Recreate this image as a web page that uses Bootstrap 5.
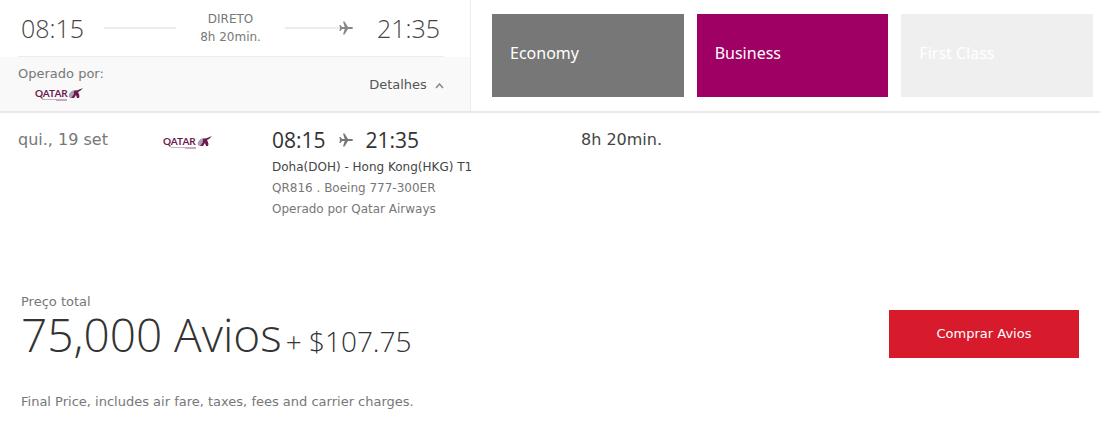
<!DOCTYPE html>
<html lang="pt-BR">
<head>
<meta charset="utf-8">
<meta name="viewport" content="width=device-width, initial-scale=1">
<title>Qatar Airways – Doha a Hong Kong</title>
<link href="https://cdn.jsdelivr.net/npm/bootstrap@5.3.0/dist/css/bootstrap.min.css" rel="stylesheet">
<style>
  body { font-family: "DejaVu Sans", Verdana, sans-serif; font-size: 12px; line-height: 18px; color: #777; background: #fff; }
  .summary-bar { border-bottom: 2px solid #e9e9e9; }
  .flight-pane { flex: 0 0 43%; max-width: 471px; border-right: 1px solid #ededed; }
  .flight-times { height: 57px; padding: 0 30px 2px 21px; }
  .flight-operator { height: 54px; padding: 8px 26px 0 18px; background: #f9f9f9; position: relative; font-size: 13px; }
  .flight-operator::before { content: ""; position: absolute; top: -1px; left: 18px; right: 26px; border-top: 1px solid #ececec; }
  .clock-time { font-family: "Open Sans", "Noto Sans", sans-serif; font-weight: 300; font-size: 25px; line-height: 30px; color: #444; }
  .clock-dark { font-family: "Open Sans", "Noto Sans", sans-serif; font-weight: 400; font-size: 21px; line-height: 26px; color: #333; }
  .route-line { height: 2px; background: #ececec; }
  .route-start { margin-left: 20px; flex: 4 1 0; }
  .route-end { flex: 3 1 0; }
  .operator-logo { width: 50px; height: 16px; display: block; }
  .operator-logo text { font-family: Lato, sans-serif; font-weight: 700; font-size: 10px; fill: #6b1c4e; }
  .details-toggle { font-size: 13px; color: #555; margin-bottom: 6px; }
  .cabins { padding: 14px 7px 14px 21px; gap: 13px; }
  .cabin { flex: 1 1 0; border: 0; color: #fff; text-align: left; font-family: "Noto Sans", sans-serif; font-size: 16px; line-height: 20px; padding: 0 18px 6px; }
  .cabin-economy { background: #777; }
  .cabin-business { background: #9f0063; }
  .cabin-first { background: #efefef; }
  .segment { display: grid; grid-template-columns: 145px 109px 309px 1fr; padding: 14px 18px 0; min-height: 180px; }
  .segment-label { font-size: 16px; line-height: 26px; }
  .segment-info { line-height: 21px; }
  .segment-hours { gap: 13px; margin-bottom: 4px; }
  .ink { color: #444; }
  .price { padding: 0 21px; }
  .price-label { font-size: 13px; }
  .total-amount { font-family: "Open Sans", "Noto Sans", sans-serif; font-weight: 300; color: #333; line-height: 46px; font-size: 46px; gap: 4px; }
  .total-cash { font-size: 28px; }
  .fine-print { font-size: 13px; margin-top: 29px; }
  .buy-button { width: 190px; height: 48px; margin-top: 17px; background: #d71a2c; color: #fff; border: 0; border-radius: 0; font-size: 13px; }
</style>
</head>
<body>
<svg class="d-none" aria-hidden="true">
  <symbol id="plane" viewBox="0 0 14 14"><path d="M14 7c0-.7-.8-1-1.700-1H9L5.500.5H4L5.700 6H3L1.500 4H.4L1 7 .4 10h1.100L3 8h2.700L4 13.500h1.500L9 8h3.300c.9 0 1.700-.3 1.700-1z"/></symbol>
  <symbol id="oryx" viewBox="0 0 50 16">
    <path d="M8 12.500h14" stroke="#c5b5c1" fill="none"/><path d="M22 13h11" stroke="#9c5580" fill="none"/>
    <path d="M35 10c-1-3 2-7 6-7l2 1-4 3v4c-2 0-3 0-4-1z" fill="#aaa1b0"/>
    <path d="M40 4l4-1 5-2-3 3-2 1c1 2 2 4 1 6h-2l-1-3-2 3h-3c2-2 3-4 3-7z" fill="#6b1c4e"/>
  </symbol>
</svg>
<header class="summary-bar d-flex">
  <section class="flight-pane">
    <div class="flight-times d-flex align-items-center">
      <span class="clock-time">08:15</span>
      <span class="route-line route-start"></span>
      <span class="text-center mx-4">DIRETO<br>8h 20min.</span>
      <span class="route-line route-end"></span>
      <svg width="14" height="14" fill="#888"><use href="#plane"/></svg>
      <span class="clock-time ms-4">21:35</span>
    </div>
    <div class="flight-operator d-flex justify-content-between">
      <div>Operado por:
        <svg class="operator-logo ms-3 mt-1" viewBox="0 0 50 16" role="img" aria-label="Qatar Airways"><text x="1" y="10">QATAR</text><use href="#oryx" width="50" height="16"/></svg>
      </div>
      <a href="#segment" class="details-toggle text-decoration-none align-self-center">Detalhes <svg class="ms-1" width="9" height="6" fill="none" stroke="#888" stroke-width="1.500"><path d="M1 5l3.500-4L8 5"/></svg></a>
    </div>
  </section>
  <section class="cabins d-flex flex-fill">
    <button type="button" class="cabin cabin-economy">Economy</button>
    <button type="button" class="cabin cabin-business">Business</button>
    <button type="button" class="cabin cabin-first">First Class</button>
  </section>
</header>
<main>
  <section class="segment" id="segment">
    <div class="segment-label">qui., 19 set</div>
    <div class="pt-2"><svg class="operator-logo" viewBox="0 0 50 16" role="img" aria-label="Qatar Airways"><text x="0" y="10">QATAR</text><use href="#oryx" width="50" height="16"/></svg></div>
    <div class="segment-info">
      <div class="segment-hours d-flex align-items-center"><span class="clock-dark">08:15</span><svg width="14" height="14" fill="#777"><use href="#plane"/></svg><span class="clock-dark">21:35</span></div>
      <div class="ink">Doha(DOH) - Hong Kong(HKG) T1</div>
      <div>QR816 . Boeing 777-300ER</div>
      <div>Operado por Qatar Airways</div>
    </div>
    <div class="segment-label ink">8h 20min.</div>
  </section>
  <section class="price d-flex justify-content-between">
    <div>
      <div class="price-label">Preço total</div>
      <div class="total-amount d-flex align-items-baseline"><span>75,000 Avios</span><span class="total-cash">+ $107.75</span></div>
      <p class="fine-print">Final Price, includes air fare, taxes, fees and carrier charges.</p>
    </div>
    <button type="button" class="buy-button">Comprar Avios</button>
  </section>
</main>
<script src="https://cdn.jsdelivr.net/npm/bootstrap@5.3.0/dist/js/bootstrap.bundle.min.js"></script>
</body>
</html>
